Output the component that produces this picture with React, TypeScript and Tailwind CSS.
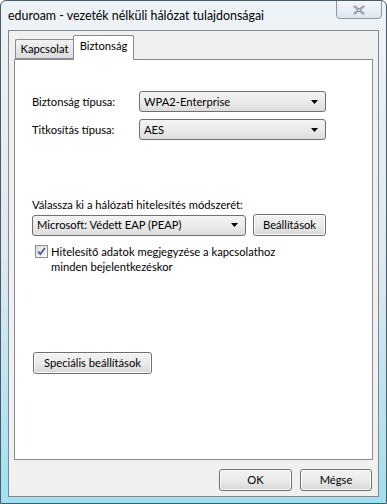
import React from "react"

const font = { fontFamily: 'Lato, "Noto Sans", sans-serif' }

function Select({ value, width }: { value: string; width: string }) {
  return (
    <div
      className={`${width} h-[21px] flex items-center justify-between pl-[4px] pr-[7px] rounded-[3px] border border-[#707070] bg-gradient-to-b from-[#f3f3f3] via-[#ebebeb] to-[#dcdcdc]`}
    >
      <span className="text-[11.2px] text-black leading-none">{value}</span>
      <svg width="7" height="4" viewBox="0 0 7 4">
        <path d="M0 0h7L3.5 4z" fill="#000" />
      </svg>
    </div>
  )
}

function Button({ label, width }: { label: string; width: string }) {
  return (
    <button
      className={`${width} h-[22px] flex items-center justify-center rounded-[3px] border border-[#707070] bg-gradient-to-b from-[#f2f2f2] via-[#ebebeb] to-[#d6d6d6] text-[11.2px] text-black leading-none shadow-[inset_0_0_0_1px_#fcfcfc]`}
    >
      {label}
    </button>
  )
}

export default function App() {
  return (
    <div
      className="w-[387px] h-[504px] flex flex-col overflow-hidden bg-gradient-to-b from-[#eef3f7] via-[#dfe9f0] to-[#9fe0f0] border border-[#4a5a66] rounded-t-[6px]"
      style={font}
    >
      {/* title bar */}
      <div className="h-[29px] flex items-start justify-between pl-[7px] pr-[4px]">
        <span className="pt-[7px] text-[12.4px] leading-[15px] text-black">eduroam - vezeték nélküli hálózat tulajdonságai</span>
        <div className="w-[46px] h-[19px] -mt-px flex items-center justify-center rounded-b-[4px] border border-[#8b98a6] bg-gradient-to-b from-[#f4f7fa] to-[#dde6ee]">
          <svg width="12" height="10" viewBox="0 0 12 10">
            <path d="M1 1l10 8M11 1L1 9" stroke="#5d6875" strokeWidth="2.2" fill="none" />
            <path d="M1 1l10 8M11 1L1 9" stroke="#f3f5f7" strokeWidth="0.8" fill="none" />
          </svg>
        </div>
      </div>

      {/* client area */}
      <div className="mx-[7px] mb-[6px] flex-1 flex flex-col border border-[#7d8790] bg-[#f0f0f0] px-[5px]">
        {/* tabs */}
        <div className="flex items-end h-[28px] pl-px text-[11.2px] text-black">
          <div className="h-[20px] w-[58px] flex items-center justify-center border border-[#898c95] border-r-0 rounded-tl-[2px] bg-gradient-to-b from-[#f2f2f2] to-[#dcdcdc]">
            Kapcsolat
          </div>
          <div className="h-[25px] w-[61px] -mb-px z-10 pb-[4px] flex items-center justify-center border border-[#898c95] border-b-0 rounded-t-[2px] bg-white">
            Biztonság
          </div>
        </div>

        {/* panel */}
        <div className="h-[401px] border border-[#898c95] bg-white flex flex-col pl-[17px] pt-[31px] text-[11.2px] leading-[15px] text-black">
          <div className="flex items-center h-[21px]">
            <span className="w-[107px]">Biztonság típusa:</span>
            <Select value="WPA2-Enterprise" width="w-[187px]" />
          </div>
          <div className="flex items-center h-[21px] mt-[7px]">
            <span className="w-[107px]">Titkosítás típusa:</span>
            <Select value="AES" width="w-[187px]" />
          </div>

          <div className="mt-[57px] leading-[16px]">Válassza ki a hálózati hitelesítés módszerét:</div>
          <div className="flex items-center mt-[1px] gap-[7px]">
            <Select value="Microsoft: Védett EAP (PEAP)" width="w-[214px]" />
            <Button label="Beállítások" width="w-[73px]" />
          </div>
          <div className="flex items-start mt-[8px] pl-[3px]">
            <div className="mt-px w-[13px] h-[13px] shrink-0 border border-[#8e8f8f] bg-gradient-to-br from-[#dcdcdc] to-[#fbfbfb] flex items-center justify-center">
              <svg width="9" height="9" viewBox="0 0 9 9">
                <path d="M1 4.5l2.3 2.5L8 1" stroke="#4a5f97" strokeWidth="1.8" fill="none" />
              </svg>
            </div>
            <div className="ml-[3px] leading-[15px]">
              Hitelesítő adatok megjegyzése a kapcsolathoz
              <br />
              minden bejelentkezéskor
            </div>
          </div>

          <div className="mt-[78px] pl-px">
            <Button label="Speciális beállítások" width="w-[119px]" />
          </div>
        </div>

        {/* bottom buttons */}
        <div className="flex justify-end gap-[8px] mt-[9px] pr-px">
          <Button label="OK" width="w-[73px]" />
          <Button label="Mégse" width="w-[72px]" />
        </div>
      </div>
    </div>
  )
}
